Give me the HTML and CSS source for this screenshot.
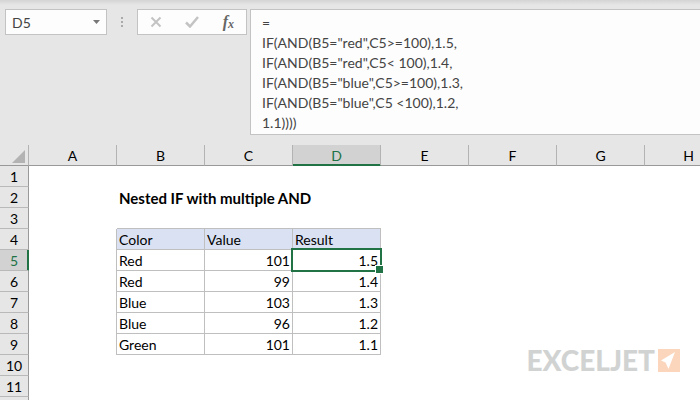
FILE: index.html
```html
<!DOCTYPE html>
<html lang="en">
<head>
    <meta charset="UTF-8">
    <meta name="viewport" content="width=device-width, initial-scale=1.0">
    <title>Nested IF with multiple AND</title>
    <link rel="stylesheet" href="styles.css">
</head>
<body>

    <div class="toolbar">
        <div class="name-box">
            <input type="text" class="name-input" value="D5" aria-label="Name box">
            <button type="button" class="name-arrow" aria-label="Show names">
                <svg width="7" height="4" viewBox="0 0 7 4"><path d="M0 0h7L3.5 4z" fill="#777"/></svg>
            </button>
        </div>
        <svg class="grip" width="2" height="10" viewBox="0 0 2 10"><path d="M0 0h2v2H0zM0 4h2v2H0zM0 8h2v2H0z" fill="#aaa"/></svg>
        <div class="fx-box">
            <button type="button" aria-label="Cancel">
                <svg width="12" height="12" viewBox="0 0 12 12"><path d="M1.5 1.5l9 9M10.5 1.5l-9 9" stroke="#c3c3c3" stroke-width="2" fill="none"/></svg>
            </button>
            <button type="button" aria-label="Enter">
                <svg width="14" height="12" viewBox="0 0 14 12"><path d="M1 6.5l4 4L13 1" stroke="#c3c3c3" stroke-width="2.5" fill="none"/></svg>
            </button>
            <button type="button" class="fx" aria-label="Insert function">f<span>x</span></button>
        </div>
        <textarea class="formula" rows="6" aria-label="Formula" spellcheck="false">
=
IF(AND(B5="red",C5&gt;=100),1.5,
IF(AND(B5="red",C5&lt; 100),1.4,
IF(AND(B5="blue",C5&gt;=100),1.3,
IF(AND(B5="blue",C5 &lt;100),1.2,
1.1))))</textarea>
    </div>

    <div class="sheet">
        <table class="grid">
            <thead>
                <tr>
                    <th class="corner"><svg width="13" height="13" viewBox="0 0 13 13"><path d="M13 0v13H0z" fill="#b3b3b3"/></svg></th>
                    <th>A</th><th>B</th><th>C</th><th class="active">D</th><th>E</th><th>F</th><th>G</th><th>H</th>
                </tr>
            </thead>
            <tbody>
                <tr><th>1</th><td></td><td></td><td></td><td></td><td></td><td></td><td></td><td></td></tr>
                <tr><th>2</th><td></td><td class="title" colspan="3">Nested IF with multiple AND</td><td></td><td></td><td></td><td></td></tr>
                <tr><th>3</th><td></td><td class="edge-bottom"></td><td class="edge-bottom"></td><td class="edge-bottom"></td><td></td><td></td><td></td><td></td></tr>
                <tr><th>4</th><td class="edge-right"></td><td class="cell head">Color</td><td class="cell head">Value</td><td class="cell head">Result</td><td></td><td></td><td></td><td></td></tr>
                <tr><th class="active">5</th><td class="edge-right"></td><td class="cell">Red</td><td class="cell num">101</td><td class="cell num selected">1.5</td><td></td><td></td><td></td><td></td></tr>
                <tr><th>6</th><td class="edge-right"></td><td class="cell">Red</td><td class="cell num">99</td><td class="cell num">1.4</td><td></td><td></td><td></td><td></td></tr>
                <tr><th>7</th><td class="edge-right"></td><td class="cell">Blue</td><td class="cell num">103</td><td class="cell num">1.3</td><td></td><td></td><td></td><td></td></tr>
                <tr><th>8</th><td class="edge-right"></td><td class="cell">Blue</td><td class="cell num">96</td><td class="cell num">1.2</td><td></td><td></td><td></td><td></td></tr>
                <tr><th>9</th><td class="edge-right"></td><td class="cell">Green</td><td class="cell num">101</td><td class="cell num">1.1</td><td></td><td></td><td></td><td></td></tr>
                <tr><th>10</th><td></td><td></td><td></td><td></td><td></td><td></td><td></td><td></td></tr>
                <tr><th>11</th><td></td><td></td><td></td><td></td><td></td><td></td><td></td><td></td></tr>
                <tr><th></th><td></td><td></td><td></td><td></td><td></td><td></td><td></td><td></td></tr>
            </tbody>
        </table>

        <div class="logo">
            <span>EXCELJET</span>
            <svg width="22" height="23" viewBox="0 0 22 23"><path d="M0 0h22v23H0z" fill="#fbd5bc"/><path d="M17 3L3 11.500l4.500 2L10.500 20z" fill="#fff"/></svg>
        </div>
    </div>

</body>
</html>
```

FILE: styles.css
```css
* {
    box-sizing: border-box;
}

body {
    margin: 0;
    height: 100vh;
    display: flex;
    flex-direction: column;
    overflow: hidden;
    font-family: Lato, "Liberation Sans", sans-serif;
    font-size: 14px;
    color: #000;
    background-color: #fff;
}

input,
textarea,
button {
    font: inherit;
    color: #444;
    border: none;
    background: none;
    margin: 0;
    padding: 0;
    outline: none;
}

/* Formula bar */
.toolbar {
    display: flex;
    align-items: flex-start;
    padding: 9px 0 10px 5px;
    background: linear-gradient(#d4d4d4, #e6e6e6 5px);
}

.name-box,
.fx-box,
.formula {
    border: 1px solid #c3c3c3;
    background-color: #fdfdfd;
}

.name-box {
    display: flex;
    width: 102px;
    height: 26px;
}

.name-input {
    flex: 1;
    min-width: 0;
    padding-left: 6px;
}

.name-arrow {
    display: flex;
    align-items: center;
    justify-content: center;
    width: 20px;
}

.grip {
    margin: 8px 14px;
}

.fx-box {
    display: flex;
    align-items: center;
    justify-content: space-between;
    width: 110px;
    height: 26px;
    padding: 0 12px;
}

.fx-box button {
    display: flex;
    align-items: center;
}

.fx-box .fx {
    font: italic bold 16px/20px "Liberation Serif", serif;
    color: #666;
}

.fx span {
    font-size: 12px;
    padding-top: 3px;
}

.formula {
    flex: 1;
    min-width: 0;
    height: 126px;
    margin-left: 3px;
    padding: 3px 11px 1px;
    border-right: none;
    line-height: 20px;
    resize: none;
    overflow: hidden;
    white-space: pre;
}

/* Sheet */
.sheet {
    flex: 1;
    position: relative;
    overflow: hidden;
}

.grid {
    width: 733px;
    table-layout: fixed;
    border-collapse: separate;
    border-spacing: 0;
    line-height: 18px;
}

.grid th,
.grid td {
    height: 21px;
    padding: 2px 0 0;
    white-space: nowrap;
}

.grid th {
    font-weight: normal;
    background-color: #e6e6e6;
}

.grid thead th {
    border-bottom: 1px solid #999;
    border-right: 1px solid #b3b3b3;
}

.grid .corner {
    width: 29px;
    padding-right: 3px;
}

.corner svg {
    display: block;
    margin-left: auto;
}

.grid tbody th {
    border-right: 1px solid #999;
    border-bottom: 1px solid #b9b9b9;
}

.grid th.active {
    color: #217346;
    background-color: #d2d2d2;
}

.grid thead .active {
    border-bottom-color: #217346;
    box-shadow: inset 0 -1px #217346;
}

.grid tbody .active {
    border-right-color: #217346;
    box-shadow: inset -1px 0 #217346;
}

.grid .title {
    padding: 0 2px;
    font-size: 15px;
    font-weight: bold;
}

.grid .edge-right {
    border-right: 1px solid #bfbfbf;
}

.grid .edge-bottom {
    border-bottom: 1px solid #bfbfbf;
}

.grid .cell {
    padding: 2px 2px 0;
    border-right: 1px solid #bfbfbf;
    border-bottom: 1px solid #bfbfbf;
}

.grid .head {
    background-color: #d9e1f2;
}

.grid .num {
    text-align: right;
}

.selected {
    position: relative;
}

.selected::before {
    content: "";
    position: absolute;
    inset: -2px;
    border: 2px solid #217346;
}

.selected::after {
    content: "";
    position: absolute;
    right: -4px;
    bottom: -4px;
    width: 7px;
    height: 7px;
    border: 1px solid #fff;
    background-color: #217346;
}

.logo {
    position: absolute;
    right: 20px;
    bottom: 23px;
    display: flex;
    align-items: center;
    gap: 3px;
    font-size: 28px;
    font-weight: 900;
    line-height: 34px;
    color: #d1d3d2;
}
```
